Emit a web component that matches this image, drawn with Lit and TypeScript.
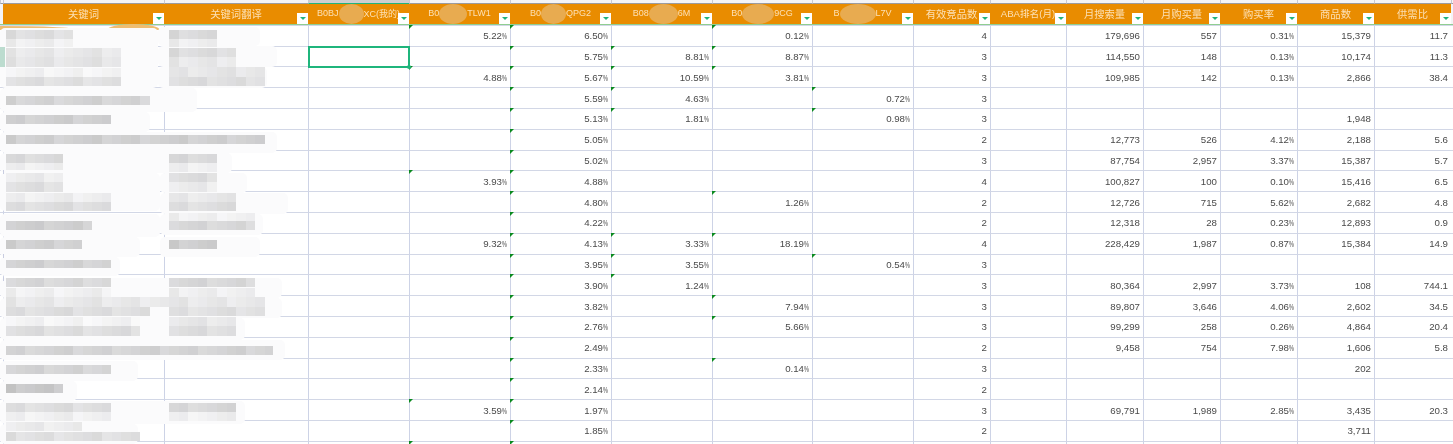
import { LitElement, html, css } from "lit";
import { customElement } from "lit/decorators.js";

type H = { a: string; hide?: number; b?: string; cls?: string };
const HEAD: H[] = [
  { a: "关键词" },
  { a: "关键词翻译" },
  { a: "B0BJ", hide: 25, b: "XC(我的)", cls: "code" },
  { a: "B0", hide: 28, b: "TLW1", cls: "code" },
  { a: "B0", hide: 25, b: "QPG2", cls: "code" },
  { a: "B08", hide: 29, b: "6M", cls: "code" },
  { a: "B0", hide: 32, b: "9CG", cls: "code" },
  { a: "B", hide: 36, b: "L7V", cls: "code" },
  { a: "有效竞品数" },
  { a: "ABA排名(月)", cls: "aba" },
  { a: "月搜索量" },
  { a: "月购买量" },
  { a: "购买率" },
  { a: "商品数" },
  { a: "供需比" },
];

// each row: the thirteen columns right of the translation
const ROWS: string[][] = [
  ["", "5.22%", "6.50%", "", "0.12%", "", "4", "", "179,696", "557", "0.31%", "15,379", "11.7"],
  ["", "", "5.75%", "8.81%", "8.87%", "", "3", "", "114,550", "148", "0.13%", "10,174", "11.3"],
  ["", "4.88%", "5.67%", "10.59%", "3.81%", "", "3", "", "109,985", "142", "0.13%", "2,866", "38.4"],
  ["", "", "5.59%", "4.63%", "", "0.72%", "3", "", "", "", "", "", ""],
  ["", "", "5.13%", "1.81%", "", "0.98%", "3", "", "", "", "", "1,948", ""],
  ["", "", "5.05%", "", "", "", "2", "", "12,773", "526", "4.12%", "2,188", "5.6"],
  ["", "", "5.02%", "", "", "", "3", "", "87,754", "2,957", "3.37%", "15,387", "5.7"],
  ["", "3.93%", "4.88%", "", "", "", "4", "", "100,827", "100", "0.10%", "15,416", "6.5"],
  ["", "", "4.80%", "", "1.26%", "", "2", "", "12,726", "715", "5.62%", "2,682", "4.8"],
  ["", "", "4.22%", "", "", "", "2", "", "12,318", "28", "0.23%", "12,893", "0.9"],
  ["", "9.32%", "4.13%", "3.33%", "18.19%", "", "4", "", "228,429", "1,987", "0.87%", "15,384", "14.9"],
  ["", "", "3.95%", "3.55%", "", "0.54%", "3", "", "", "", "", "", ""],
  ["", "", "3.90%", "1.24%", "", "", "3", "", "80,364", "2,997", "3.73%", "108", "744.1"],
  ["", "", "3.82%", "", "7.94%", "", "3", "", "89,807", "3,646", "4.06%", "2,602", "34.5"],
  ["", "", "2.76%", "", "5.66%", "", "3", "", "99,299", "258", "0.26%", "4,864", "20.4"],
  ["", "", "2.49%", "", "", "", "2", "", "9,458", "754", "7.98%", "1,606", "5.8"],
  ["", "", "2.33%", "", "0.14%", "", "3", "", "", "", "", "202", ""],
  ["", "", "2.14%", "", "", "", "2", "", "", "", "", "", ""],
  ["", "3.59%", "1.97%", "", "", "", "3", "", "69,791", "1,989", "2.85%", "3,435", "20.3"],
  ["", "", "1.85%", "", "", "", "2", "", "", "", "", "3,711", ""],
  ["", "", "", "", "", "", "", "", "", "", "", "", ""],
];

// [y, h, x, right, base grey]: pixelated redaction bands
const BANDS: number[][] = [
  [30, 9, 6, 73, 222], [39, 8, 6, 73, 238], [48, 9, 6, 121, 232], [57, 10, 6, 121, 228],
  [68, 9, 6, 121, 243], [77, 9, 6, 121, 224], [96, 9, 6, 150, 212], [115, 9, 6, 111, 208],
  [135, 9, 6, 265, 208], [154, 9, 6, 63, 218], [163, 7, 6, 63, 238], [173, 9, 6, 63, 236],
  [182, 10, 6, 63, 224], [193, 9, 6, 111, 238], [202, 9, 6, 111, 222], [221, 9, 6, 92, 208],
  [240, 9, 6, 82, 208], [260, 8, 6, 111, 210], [278, 9, 6, 111, 216], [288, 9, 6, 111, 240],
  [297, 10, 6, 265, 232], [307, 9, 6, 150, 222], [317, 9, 6, 140, 244], [326, 10, 6, 140, 222],
  [346, 9, 6, 273, 212], [365, 9, 6, 111, 212], [384, 9, 6, 63, 200], [403, 9, 6, 111, 222],
  [412, 9, 6, 111, 240], [422, 9, 6, 82, 236], [432, 9, 6, 140, 224],
  [30, 9, 169, 217, 218], [39, 8, 169, 217, 238], [48, 9, 169, 236, 220], [57, 10, 169, 236, 232],
  [67, 10, 169, 265, 230], [77, 9, 169, 265, 222], [154, 9, 169, 217, 216], [163, 9, 169, 217, 238],
  [173, 9, 169, 217, 222], [182, 10, 169, 217, 236], [193, 9, 169, 236, 232], [202, 9, 169, 236, 222],
  [213, 8, 169, 255, 240], [221, 9, 169, 255, 216], [240, 9, 169, 217, 206], [278, 9, 169, 255, 216],
  [288, 9, 169, 255, 238], [307, 9, 169, 265, 224], [317, 9, 169, 236, 232], [326, 10, 169, 236, 222],
  [403, 9, 169, 236, 216], [412, 9, 169, 236, 240],
];

// [x, y, w, h]: pale smears that wipe out grid lines behind the redaction
const SMEARS: number[][] = [
  [0, 28, 158, 60], [158, 27, 102, 19], [158, 46, 119, 21], [158, 67, 109, 21], [0, 88, 197, 24], [0, 112, 150, 20],
  [0, 132, 277, 21], [0, 153, 232, 20], [160, 173, 87, 20], [0, 173, 160, 38], [160, 193, 128, 21], [160, 214, 103, 21],
  [0, 214, 160, 23], [0, 237, 140, 20], [160, 237, 100, 20], [0, 257, 120, 19], [0, 278, 282, 20], [0, 298, 282, 20],
  [0, 318, 245, 22], [0, 340, 285, 20], [0, 361, 138, 20], [0, 381, 77, 20], [0, 401, 245, 23], [0, 424, 138, 20],
];

const shade = (base: number, i: number, y: number) => {
  const g = base + (((i * 7 + y * 3) % 9) - 4) * 1.5;
  const v = Math.min(250, Math.round(g));
  return `rgb(${v},${v},${v + ((i + y) % 3)})`;
};

const NO_FLAG = new Set(["10:1"]);

@customElement("app-root")
export class AppRoot extends LitElement {
  static styles = css`
    :host { display: block; width: 1453px; height: 444px; overflow: hidden; background: #fff; }
    .sheet {
      position: relative; width: 1453px; height: 444px; overflow: hidden;
      display: grid; align-content: start;
      grid-template-columns: 3px 161px 144px repeat(4, 101px) 100px 101px 77px 76px repeat(5, 77px) 2px;
      grid-template-rows: 4px 20.8px;
      grid-auto-rows: 20.8px;
      font-family: "Liberation Sans", "Noto Sans CJK SC", sans-serif;
      font-size: 9.7px; color: #4a4a4a;
      filter: blur(0.35px);
    }
    .top { background: #f4f4f6; border-left: 1px solid #c9c9d2; border-bottom: 1px solid #9b9b9f; box-sizing: border-box; }
    .top.sel { background: #cfcfcf; border-bottom-color: #1fb57c; }
    .gut { background: #fff; border-top: 1px solid #d4d8e6; box-sizing: border-box; }
    .gut.hd { background: #f4f4f6; border-top: 0; border-bottom: 1px solid #8fce92; }
    .hc {
      position: relative; background: #e98c00; color: #fce0b4; font-size: 10.3px;
      display: flex; align-items: center; justify-content: center; white-space: nowrap;
      box-sizing: border-box; padding-bottom: 1px;
      border-bottom: 1px solid #8fce92;
      font-family: "Noto Sans CJK SC", "Liberation Sans", sans-serif;
    }
    .hc.code { font-size: 9px; font-family: "Liberation Sans", "Noto Sans CJK SC", sans-serif; }
    .hc.aba { font-size: 9.6px; font-family: "Liberation Sans", "Noto Sans CJK SC", sans-serif; }
    .oval { display: inline-block; height: 20px; margin: -1px 0 -2px; background: #e8ab50; border-radius: 50%; }
    .btn {
      position: absolute; right: 0; top: 9px; width: 11px; height: 11px; background: #fff;
      display: flex; align-items: center; justify-content: center;
    }
    .btn i { width: 0; height: 0; border-left: 3px solid transparent; border-right: 3px solid transparent; border-top: 3px solid #21b37c; }
    .c {
      position: relative; box-sizing: border-box; border-left: 1px solid #cdd3e6; border-top: 1px solid #d2d7e6;
      display: flex; align-items: center; justify-content: flex-end; padding-right: 3px; white-space: nowrap;
    }
    .c small {
      display: inline-block; font-size: 9px; transform: scaleX(0.62); transform-origin: right center;
      margin-left: -3px;
    }
    .flag::before {
      content: ""; position: absolute; left: -1px; top: -1px; width: 0; height: 0;
      border-top: 4px solid #0b8a1f; border-right: 4px solid transparent;
    }
    .sel-box { position: absolute; z-index: 2; left: -1px; top: -1px; right: -1px; bottom: -2px; border: 2px solid #1fb57c; }
    .sel-box::after {
      content: ""; position: absolute; right: -3px; bottom: -3px; width: 4px; height: 4px;
      background: #1fb57c; border-radius: 50%;
    }
    .ov { position: absolute; }
    .smear { background: #fbfbfc; border-radius: 5px; }
    .band { display: flex; overflow: hidden; }
    .band span { flex: 0 0 9.6px; height: 100%; }
    .dome { background: #efbd70; }
    .mark { background: #bcdccf; }
    .tick { background: #c8cce0; }
  `;

  private val(v: string) {
    if (v.endsWith("%")) return html`<span>${v.slice(0, -1)}<small>%</small></span>`;
    return v;
  }

  render() {
    const tops = Array.from({ length: 17 }, (_, i) => i);
    return html`<div class="sheet">
      ${tops.map((i) => html`<div class="top ${i === 3 ? "sel" : ""}"></div>`)}
      <div class="gut hd"></div>
      ${HEAD.map(
        (h) => html`<div class="hc ${h.cls ?? ""}">
          <span>${h.a}</span>
          ${h.hide ? html`<span class="oval" style="width:${h.hide}px"></span><span>${h.b}</span>` : ""}
          <div class="btn"><i></i></div>
        </div>`
      )}
      <div class="gut hd"></div>
      ${ROWS.map(
        (r, ri) => html`<div class="gut"></div>
          <div class="c"></div>
          <div class="c"></div>
          ${r.map((v, ci) => {
            const isComp = ci >= 1 && ci <= 5;
            const last = ri === ROWS.length - 1 && (ci === 1 || ci === 2);
            const flag = last || (isComp && v !== "" && !NO_FLAG.has(`${ri}:${ci}`));
            return html`<div class="c ${flag ? "flag" : ""}">
              ${this.val(v)}${ri === 1 && ci === 0 ? html`<div class="sel-box"></div>` : ""}
            </div>`;
          })}
          <div class="gut"></div>`
      )}
      <div class="ov dome" style="left:0;top:26px;width:80px;height:4px;border-top-right-radius:100% 100%"></div>
      <div class="ov dome" style="left:107px;top:24px;width:53px;height:6px;border-radius:50% 50% 0 0 / 100% 100% 0 0"></div>
      ${SMEARS.map(
        ([x, y, w, h]) => html`<div class="ov smear" style="left:${x}px;top:${y}px;width:${w}px;height:${h}px"></div>`
      )}
      <div class="ov mark" style="left:0;top:47px;width:5px;height:20px"></div>
      ${[170, 254, 277].map((y) => html`<div class="ov tick" style="left:3px;top:${y}px;width:1px;height:4px"></div>`)}
      ${BANDS.map(([y, h, x, x2, g]) => {
        const n = Math.ceil((x2 - x) / 9.6);
        return html`<div class="ov band" style="left:${x}px;top:${y}px;width:${x2 - x}px;height:${h}px">
          ${Array.from({ length: n }, (_, i) => html`<span style="background:${shade(g, i, y)}"></span>`)}
        </div>`;
      })}
    </div>`;
  }
}
